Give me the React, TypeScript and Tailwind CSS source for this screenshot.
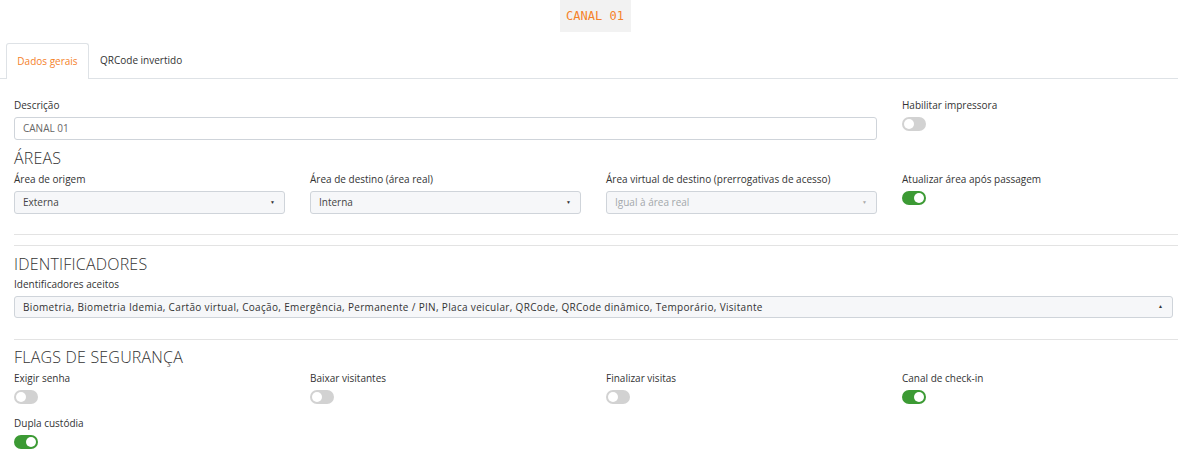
import React from "react";

const font = { fontFamily: '"Open Sans", "Liberation Sans", sans-serif' };

function Toggle({ on }: { on?: boolean }) {
  return (
    <div
      className={
        "relative mt-[1px] w-[24px] h-[14px] rounded-full " +
        (on ? "bg-[#3c9a34]" : "bg-[#d2d2d2]")
      }
    >
      <div
        className={
          "absolute top-[2px] w-[10px] h-[10px] rounded-full bg-white " +
          (on ? "right-[2px]" : "left-[2px]")
        }
      />
    </div>
  );
}

function Select({ value, disabled }: { value: string; disabled?: boolean }) {
  return (
    <div className="h-[23px] border border-[#cfd4da] rounded-[3px] bg-[#f6f7f9] flex items-center justify-between pl-[8px] pr-[9px]">
      <span className={"text-[10px] " + (disabled ? "text-[#a3a7ab]" : "text-[#444]")}>
        {value}
      </span>
      <span className={"text-[5px] " + (disabled ? "text-[#aaa]" : "text-[#333]")}>▼</span>
    </div>
  );
}

function Label({ children }: { children: React.ReactNode }) {
  return <div className="text-[10px] text-[#333] h-[13px] leading-[13px] mb-[5px]">{children}</div>;
}

function Heading({ children }: { children: React.ReactNode }) {
  return <div className="text-[16px] font-light text-[#333] leading-[20px] tracking-[0.2px]">{children}</div>;
}

export default function App() {
  return (
    <div className="w-[1178px] h-[463px] bg-white overflow-hidden" style={font}>
      <div className="flex justify-center">
        <div
          className="ml-[12px] h-[32px] w-[71px] bg-[#f2f2f2] flex items-center justify-center text-[12px] text-[#f5822a]"
          style={{ fontFamily: '"DejaVu Sans Mono", monospace' }}
        >
          CANAL 01
        </div>
      </div>

      <div className="mt-[10px] flex items-end border-b border-[#dee2e6] pl-[6px]">
        <div className="h-[36px] w-[83px] border border-b-0 border-[#dee2e6] rounded-t-[3px] bg-white flex items-center justify-center text-[10px] font-medium text-[#f5822a] -mb-px">
          Dados gerais
        </div>
        <div className="h-[36px] px-[11px] flex items-center text-[10px] font-medium text-[#333]">
          QRCode invertido
        </div>
      </div>

      <div className="pl-[14px] pr-[5px] pt-[20px]">
        <div className="grid grid-cols-[271px_271px_271px_271px] gap-x-[25px]">
          <div className="col-span-3">
            <Label>Descrição</Label>
            <div className="h-[23px] border border-[#cfd4da] rounded-[3px] bg-white flex items-center pl-[8px] text-[10px] text-[#666]">
              CANAL 01
            </div>
          </div>
          <div>
            <Label>Habilitar impressora</Label>
            <Toggle />
          </div>
        </div>

        <div className="mt-[8px]">
          <Heading>ÁREAS</Heading>
        </div>
        <div className="mt-[5px] grid grid-cols-[271px_271px_271px_271px] gap-x-[25px]">
          <div>
            <Label>Área de origem</Label>
            <Select value="Externa" />
          </div>
          <div>
            <Label>Área de destino (área real)</Label>
            <Select value="Interna" />
          </div>
          <div>
            <Label>Área virtual de destino (prerrogativas de acesso)</Label>
            <Select value="Igual à área real" disabled />
          </div>
          <div>
            <Label>Atualizar área após passagem</Label>
            <Toggle on />
          </div>
        </div>
      </div>

      <div className="ml-[14px] mt-[20px] border-t border-[#e3e3e3]" />
      <div className="ml-[14px] mt-[10px] border-t border-[#e3e3e3]" />

      <div className="pl-[14px] pr-[5px] pt-[8px]">
        <Heading>IDENTIFICADORES</Heading>
        <div className="mt-[4px]">
          <Label>Identificadores aceitos</Label>
          <div className="h-[22px] border border-[#cfd4da] rounded-[3px] bg-[#f6f7f9] flex items-center justify-between pl-[8px] pr-[9px]">
            <span className="text-[10px] text-[#333] tracking-[0.33px]">
              Biometria, Biometria Idemia, Cartão virtual, Coação, Emergência, Permanente / PIN, Placa veicular, QRCode, QRCode dinâmico, Temporário, Visitante
            </span>
            <span className="text-[5px] text-[#333]">▲</span>
          </div>
        </div>
      </div>

      <div className="ml-[14px] mt-[21px] border-t border-[#e3e3e3]" />

      <div className="pl-[14px] pr-[5px] pt-[7px]">
        <Heading>FLAGS DE SEGURANÇA</Heading>
        <div className="mt-[5px] grid grid-cols-[271px_271px_271px_271px] gap-x-[25px] gap-y-[13px]">
          <div>
            <Label>Exigir senha</Label>
            <Toggle />
          </div>
          <div>
            <Label>Baixar visitantes</Label>
            <Toggle />
          </div>
          <div>
            <Label>Finalizar visitas</Label>
            <Toggle />
          </div>
          <div>
            <Label>Canal de check-in</Label>
            <Toggle on />
          </div>
          <div>
            <Label>Dupla custódia</Label>
            <Toggle on />
          </div>
        </div>
      </div>
    </div>
  );
}
